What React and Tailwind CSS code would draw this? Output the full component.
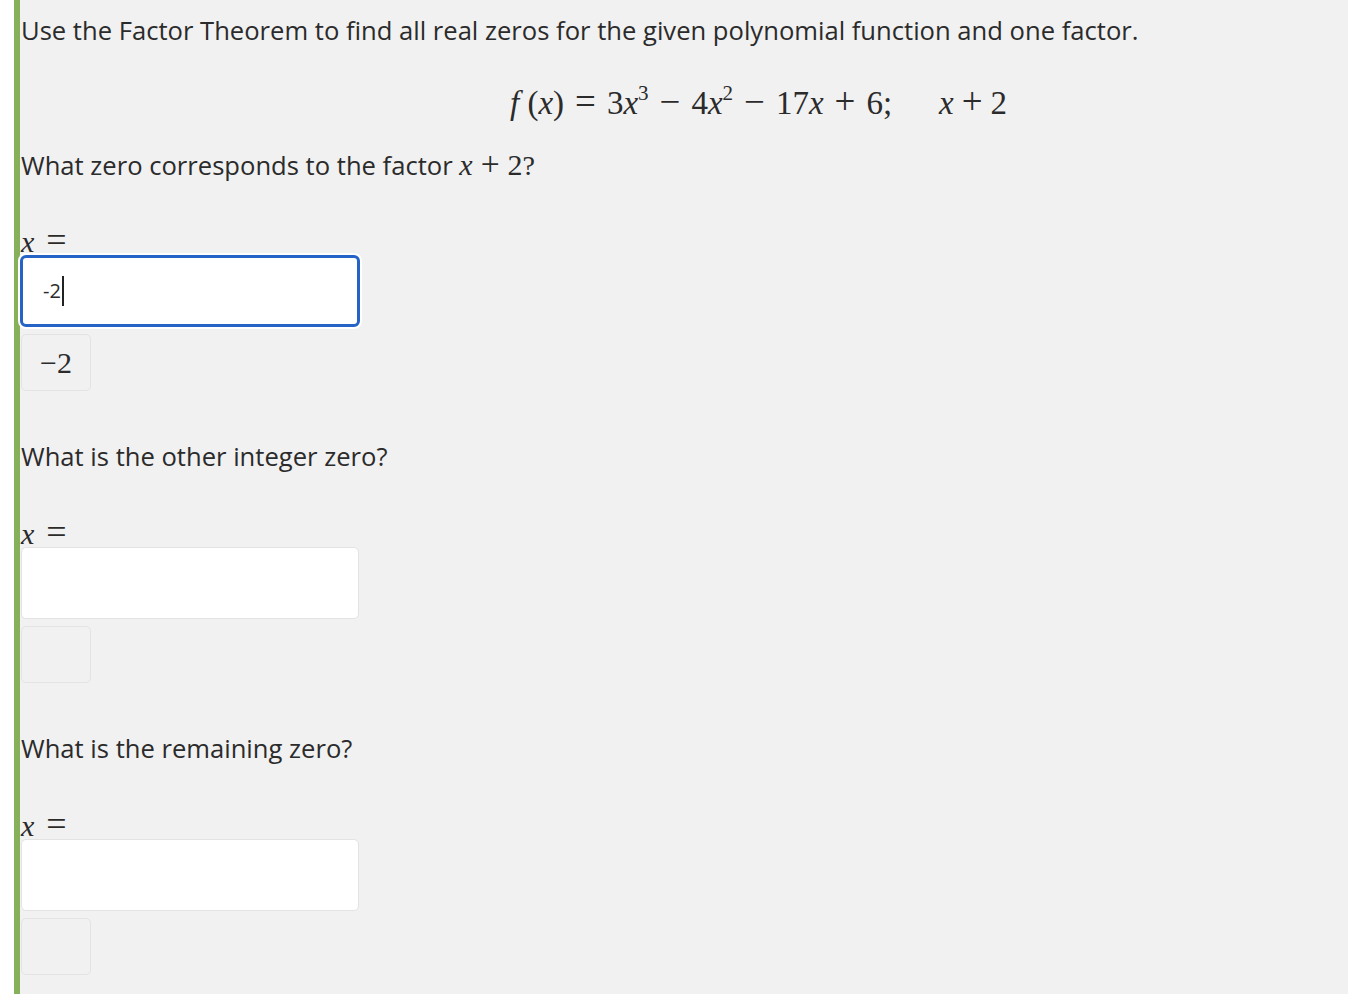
import React from "react";

const serif = { fontFamily: '"Liberation Serif", "Times New Roman", serif' };

const Op = ({ children, wide }) => (
  <span className={`${wide ? "mx-[11px]" : "mx-[8px]"} text-[1.12em] leading-none`}>{children}</span>
);

const Answer = ({ value, focused, preview }) => {
  return (
    <div>
      <div className="mt-[44px] h-[28px] leading-[28px] text-[30px] text-[#2b2b2b] relative -top-[3px]" style={serif}>
        <i>x</i>
        <span className="ml-[12px] text-[36px] leading-none">=</span>
      </div>
      {focused ? (
        <div className="mt-[2px] -ml-[1px] h-[72px] w-[340px] rounded-[6px] border-[3px] border-[#2563c6] bg-white flex items-center pl-[20px] text-[20px] text-[#2b2b2b] shadow-[0_0_0_2px_#ffffff]">
          <span>{value}</span>
          <span className="inline-block h-[30px] w-[2px] bg-[#222] ml-[1px]"></span>
        </div>
      ) : (
        <div className="mt-[2px] h-[72px] w-[338px] rounded-[5px] border border-[#e3e3e3] bg-white"></div>
      )}
      <div
        className="mt-[7px] h-[57px] w-[70px] rounded-[5px] border border-[#e3e3e3] flex items-center justify-center text-[30px] text-[#2b2b2b]"
        style={serif}
      >
        {preview}
      </div>
    </div>
  );
};

export default function App() {
  return (
    <div className="min-h-[994px] w-full bg-white flex" style={{ fontFamily: '"Open Sans", "Liberation Sans", sans-serif' }}>
      <div className="w-[14px] shrink-0 bg-white"></div>
      <div className="w-[6px] shrink-0 bg-[#86b15a]"></div>
      <div className="flex-1 bg-[#f1f1f1] pl-[1px] pt-[15px] text-[#2b2b2b]">
        <p className="text-[25.6px] leading-[32px]">
          Use the Factor Theorem to find all real zeros for the given polynomial function and one factor.
        </p>
        <div className="mt-[36px] h-[40px] pl-[489px] text-[33px] leading-[40px] whitespace-nowrap" style={serif}>
          <i>f</i> (<i>x</i>)<Op wide>=</Op>3<i>x</i>
          <sup className="text-[21px] top-[-0.65em]">3</sup>
          <Op wide>−</Op>4<i>x</i>
          <sup className="text-[21px] top-[-0.65em]">2</sup>
          <Op wide>−</Op>17<i>x</i>
          <Op wide>+</Op>6;
          <span className="ml-[47px]">
            <i>x</i>
            <Op>+</Op>2
          </span>
        </div>

        <p className="mt-[24px] h-[32px] text-[25.6px] leading-[32px]">
          What zero corresponds to the factor{" "}
          <span className="text-[30px]" style={serif}>
            <i>x</i>
            <Op>+</Op>2
          </span>
          <span className="text-[28px]" style={serif}>?</span>
        </p>
        <div className="h-[2px]"></div>
        <Answer value="-2" focused preview="−2" />

        <p className="mt-[50px] text-[25.6px] leading-[32px]">What is the other integer zero?</p>
        <Answer />

        <p className="mt-[50px] text-[25.6px] leading-[32px]">What is the remaining zero?</p>
        <Answer />
      </div>
    </div>
  );
}
